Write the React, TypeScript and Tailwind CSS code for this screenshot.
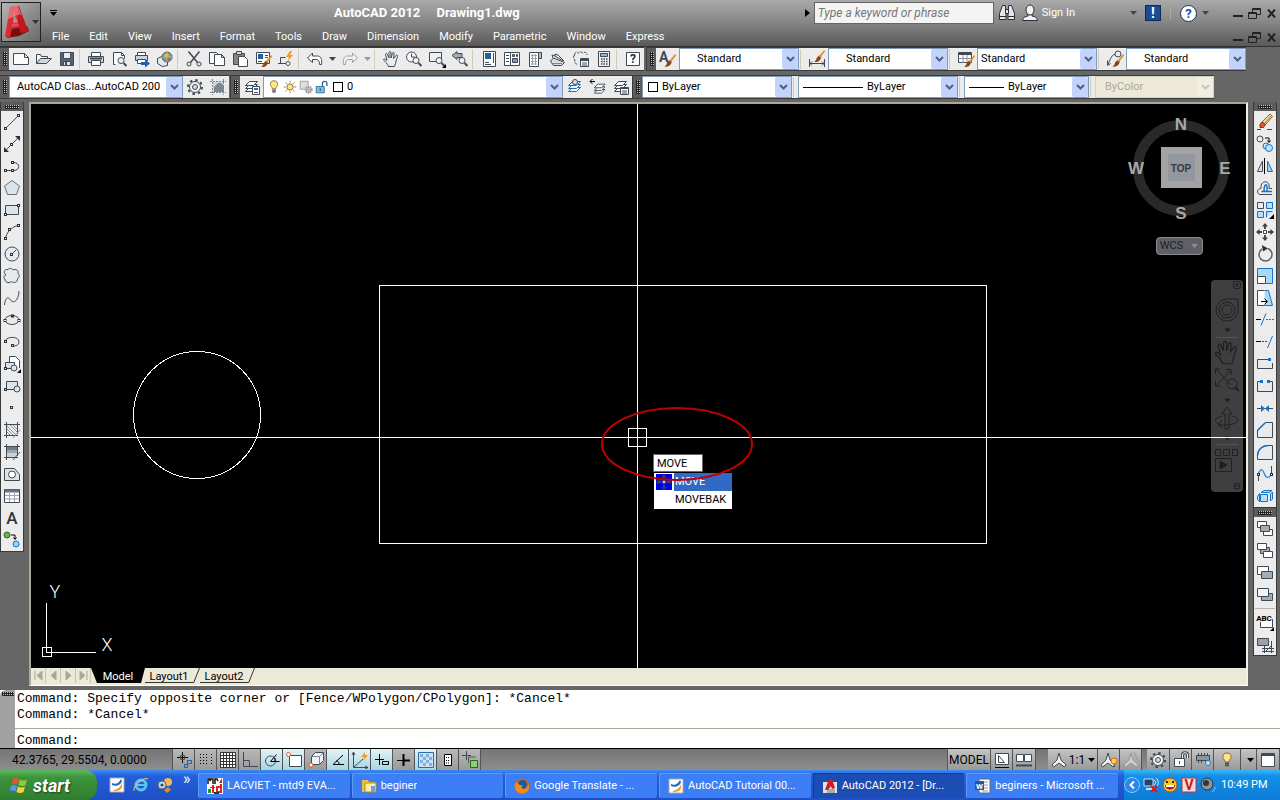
import React from 'react'
import clsx from 'clsx'

type IconMap = Record<string, React.ReactNode>

const Node = ({ x, y }: { x: number; y: number }) => (
    <rect x={x - 1} y={y - 1} width="2" height="2" fill="#ececec" stroke="#2b3138" />
)

const Brush = () => (
    <g stroke="none">
        <path d="M16.5 2.5l1.500 1-5 6.500-1.500-1.500z" fill="#e08a1e" />
        <path d="M11 8.500l2.500 2-1 2c-1 3-4 4-7.500 4 2-1.500 2.500-3 3-5z" fill="#8a4513" />
        <path d="M10.500 9l2.500 2" stroke="#f5c98a" />
    </g>
)

const Sheets = ({ color = '#3f4a54' }: { color?: string }) => (
    <g stroke={color} fill="#f8f8f8">
        <path d="M2.500 13.500h8l4-4h-8z" />
        <path d="M2.500 10.500h8l4-4h-8z" />
        <path d="M2.500 7.500h8l4-4h-8z" />
    </g>
)

const Lens = () => (
    <g>
        <circle cx="11" cy="10.500" r="3" fill="#eef4fa" />
        <path d="M13.500 13l3 3" strokeWidth="2" />
    </g>
)

const Hand = () => (
    <path d="M6.500 16.500c-1-3-3-4.500-5-6.500 0-1.500 1.500-1.500 3.500 0.500L3.500 4.500c0.300-1.500 1.500-1.500 2 0L7 8V2.500c0.300-1.300 1.700-1.300 2 0V8l1.500-5c0.500-1 1.700-0.800 1.700 0.500L11.500 8.500l2.500-3c1-0.800 2 0 1.500 1-1 2.500-1.500 6-3 10z" />
)

const icons: IconMap = {
    new: <path d="M1.500 3.500h11l4 4v7h-15zM12.500 3.500v4h4" fill="#fafafa" />,
    open: <><path d="M1.500 13.500v-9h4l1 2h6v2" fill="#f4f4f4" /><path d="M1.500 13.500l4-5h11l-5 5z" fill="#d2d6da" /></>,
    save: <><path d="M2.500 2.500h13v13h-13z" fill="#5a6470" /><path d="M5.500 2.500h7v6h-7z" fill="#e8ecf0" /><path d="M5.500 11.500h7v4h-7z" fill="#dfe3e8" /><path d="M7 12h2v3H7z" fill="#3f4a54" stroke="none" /></>,
    print: <><path d="M4.500 6.500v-4h9v4" fill="#fff" /><path d="M1.500 6.500h15v6h-15z" fill="#cfd3d7" /><path d="M4.500 10.500h9v5h-9z" fill="#fff" /><path d="M3 8.500h12" strokeWidth="2" /></>,
    preview: <><path d="M5.500 14.500h-2v-12h8l3 3v3M11.500 2.500v3h3" fill="#fafafa" /><Lens /></>,
    publish: <><path d="M4.500 5.500v-3h8v3" fill="#fff" /><path d="M2.500 5.500h12v5h-12z" fill="#cfd3d7" /><path d="M4.500 9.500h8v4h-8z" fill="#fff" /><path d="M8 12h4V9.500l5 4-5 4V15H8z" fill="#1564b8" stroke="none" /></>,
    globe: <><path d="M1.500 8.500l4-2 6 2v7l-5 1-5-3z" fill="#e6e9ec" /><circle cx="11" cy="7" r="5" fill="#4ba3dc" stroke="#59636e" /><path d="M8 4.500l4-1 1 3-3 2z" fill="#f0c430" stroke="none" /><path d="M11 8l3-1-1 3.500-2 0.500z" fill="#e04b2b" stroke="none" /><path d="M11 2v10M6 7h10" stroke="#e8b020" /></>,
    cut: <><path d="M3.500 1.500l9 11M14.500 1.500l-9 11" strokeWidth="1.500" /><circle cx="4" cy="14" r="2" /><circle cx="14" cy="14" r="2" /></>,
    copy: <><path d="M1.500 2.500h7l2 2v9h-9z" fill="#f8f8f8" /><path d="M6.500 4.500h7l3 3v8h-10zM13.500 4.500v3h3" fill="#fff" /></>,
    paste: <><path d="M2.500 3.500h11v11h-11z" fill="#8a8378" /><path d="M5.500 1.500h5v3h-5z" fill="#d9d9d9" /><path d="M7.500 6.500h6l3 3v7h-9z" fill="#fff" /></>,
    match: <><path d="M2.500 2.500h13v11h-13z" fill="#fff" /><path d="M4 4h5v5H4z" fill="#245f9f" stroke="none" /><path d="M11 5.500h3M11 7.500h3M4 11.500h4" /><g transform="translate(3 3) scale(.85)"><Brush /></g></>,
    block: <><path d="M8.500 7.500h-5v6h6M1 13.500h3" /><circle cx="11" cy="13.500" r="2" fill="#fff" /><path d="M13 1l-4 6h3l-1 4 5-6h-3l2-4z" fill="#f39b1d" stroke="none" /></>,
    undo: <path d="M1.500 8l5-5v3h5c3 0 5 3 4 8.500h-2c0-3.500-1-5-3-5h-4v3z" fill="#fcfcfc" />,
    redo: <path d="M16.500 8l-5-5v3h-5c-3 0-5 3-4 8.500h2c0-3.500 1-5 3-5h4v3z" fill="#f0f0f0" stroke="#a0a0a0" />,
    pan: <Hand />,
    zoomrt: <><circle cx="6.500" cy="7" r="5" fill="#f7f7f7" /><path d="M6.500 3.500v3.500h3.500" /><Lens /></>,
    zoomwin: <><path d="M1.500 2.500h12v9h-12z" fill="#eef0f2" /><Lens /><path d="M18 14v4h-4z" fill="#000" stroke="none" /></>,
    zoomprev: <><path d="M1 5.500l5-4v2h5v4H6v2z" fill="#a3abb3" /><Lens /></>,
    props: <><path d="M3.500 1.500h12v15h-12z" fill="#fff" /><path d="M5 3h6v6H5z" fill="#245f9f" stroke="none" /><path d="M13.500 3v10M5 12.500h4M5 14.500h6" /></>,
    dc: <><path d="M1.500 2.500h15v13h-15zM7.500 2.500v13" fill="#fff" /><path d="M9.500 4.500h2v2h-2zM13.500 4.500h1v2h-1zM9.500 8.500h5v4h-5z" fill="#7d97b4" /><path d="M3 5.500h3M3 8.500h3M3 11.500h3" /></>,
    palettes: <><path d="M3.500 2.500h9v14h-9z" fill="#fff" /><path d="M12.500 2.500h3v6h-3z" fill="#b9c0c7" /><path d="M5 5.500h6M5 8.500h6M5 11.500h6M5 14h6M6.500 4v11M9.500 4v11" stroke="#9aa3ac" /></>,
    sheetset: <><path d="M1.500 11l3-3 11 4.500-3 3h-8z" fill="#dadfe4" /><path d="M4 8l-1-3 3 1 8 5M6 6l0-2 3 1 6 6" /><path d="M4 13.500h9" stroke="#7b858f" /></>,
    markup: <><path d="M2.500 5c0-3 3-3.500 4-2 1-1.500 3-1.500 4 0 2-1.500 5-0.500 4.500 2M2.500 5c-1.500 2-1 4 .5 5-1 3 1 4.500 3 4" strokeDasharray="3 1" /><path d="M8.500 8.500h8v8h-8z" fill="#fff" /><path d="M9 10h7" strokeWidth="2" /><path d="M10 13h5M10 15h5" /></>,
    calc: <><path d="M3.500 1.500h11v15h-11z" fill="#eef0f2" /><path d="M5.500 3.500h7v3h-7z" fill="#9fb3c8" /><path d="M6 9h7M6 11.500h7M6 14h7" strokeWidth="1.500" strokeDasharray="1.500 1" /></>,
    help: <><path d="M2.500 2.500h13v13h-13z" fill="#fff" /><text x="9" y="13" fontSize="12" fontWeight="700" textAnchor="middle" fill="#1d2a38" stroke="none">?</text></>,
    textstyle: <><text x="0" y="12" fontSize="14" fontWeight="700" fill="#3f4a54" stroke="none">A</text><g transform="translate(1 2) scale(.9)"><Brush /></g></>,
    dimstyle: <><path d="M1.500 9v8M16.500 9v8M2 13.500h14M4 11.500l-2 2 2 2M14 11.500l2 2-2 2" /><g transform="translate(2 -2) scale(.85)"><Brush /></g></>,
    tablestyle: <><path d="M1.500 2.500h13v10h-13z" fill="#fff" /><path d="M2 4h12" strokeWidth="2" /><path d="M1.500 8.500h13M6 5v8M10 5v8" stroke="#8a939b" /><g transform="translate(3 3) scale(.85)"><Brush /></g></>,
    leader: <><circle cx="12" cy="4" r="3" /><path d="M9 4.500c-3 0-4 3-7 10M1.500 10.500v5l3-2" /><g transform="translate(2 2) scale(.9)"><Brush /></g></>,
    gear: <><circle cx="9" cy="9" r="5.500" fill="#f4f4f4" /><circle cx="9" cy="9" r="2.500" fill="#d5d8db" /><circle cx="9" cy="9" r="7" strokeWidth="2" strokeDasharray="2.500 3" /></>,
    workspace: <><path d="M4 4h10v10H4z" fill="#d0d4d8" stroke="none" /><path d="M1 3.500h16M1 14.500h16M3.500 1v16M14.500 1v16" strokeDasharray="2 1" stroke="#7d8790" /><path d="M5 14V9l4-4h3l3 3v6z" fill="#7d8790" stroke="none" /></>,
    layers: <><Sheets /><path d="M9.500 8.500h7v8h-7z" fill="#fff" /><path d="M11 10h4v2h-4z" fill="#1673c7" stroke="none" /><path d="M11 14.500h4" /></>,
    bulb: <><path d="M9 2c-3 0-4.500 2-4 4.500.3 1.500 2 2.500 2 4.500h4c0-2 1.700-3 2-4.500C13.500 4 12 2 9 2z" fill="#ffe58a" stroke="#8a6a2a" /><path d="M7 12.500h4M7 14.500h4" strokeWidth="1.500" /></>,
    sun: <><circle cx="9" cy="9" r="3.500" fill="#ffe58a" stroke="#80672c" /><path d="M9 2v2M9 14v2M2 9h2M14 9h2M4 4l1.500 1.500M12.500 12.500L14 14M4 14l1.500-1.500M12.500 5.500L14 4" stroke="#80672c" /></>,
    vpfreeze: <g stroke="#9b9b9b"><path d="M2.500 2.500h9v9h-9z" fill="#ddd" /><circle cx="12" cy="12" r="3.500" fill="#bbb" strokeWidth="2" strokeDasharray="1.500 1" /></g>,
    lock: <><path d="M9.500 8V5c0-3 5-3 5 0v3" strokeWidth="1.500" stroke="#286a94" /><path d="M2.500 8.500h9v7h-9z" fill="#75c3ef" stroke="#286a94" /><path d="M7 10.500v3" stroke="#103a58" /></>,
    layercur: <><Sheets color="#1673c7" /><circle cx="9" cy="4" r="2.500" fill="#dde3e8" /></>,
    layerprev: <><g transform="translate(3 3) scale(.9)"><Sheets /></g><path d="M1 3.500h5M3.500 1L1 3.500 3.500 6" stroke="#000" /></>,
    layerstate: <><Sheets /><path d="M8.500 9.500h8v7h-8z" fill="#fff" /><path d="M8.500 10.500h8" /><path d="M10 13h5M10 15h5" /></>,

    line: <><path d="M3 15L15 3" /><Node x={2.500} y={15.500} /><Node x={15.500} y={2.500} /></>,
    xline: <><path d="M2 16L16 2" /><path d="M1 12v5h5zM17 6V1h-5z" fill="#2b3138" stroke="none" /><Node x={8.500} y={9.500} /></>,
    pline: <><path d="M2.500 13.500h8c7 0 7-8 0-8" /><Node x={2.500} y={13.500} /><Node x={9.500} y={13.500} /><Node x={9.500} y={5.500} /></>,
    polygon: <path d="M9 1.500l7.500 5.500-3 8.500h-9L1.500 7z" fill="#dde4e9" stroke="#68727b" />,
    rect: <><path d="M2.500 4.500h13v9h-13z" fill="#dde4e9" /><Node x={2.500} y={13.500} /><Node x={15.500} y={4.500} /></>,
    arc: <><path d="M2.500 15.500c1-6 6-12 13-13" /><Node x={2.500} y={15.500} /><Node x={6.500} y={6.500} /><Node x={15.500} y={2.500} /></>,
    circle: <><circle cx="9" cy="9" r="7" fill="#e5eaee" /><path d="M9 9l4-4" /><Node x={8.500} y={9.500} /></>,
    revcloud: <path d="M3 8C0 6 1 2 5 2.500c2-2 4-1 5 .5 3-1.500 6 .5 5 3.500 2 2 1.500 4-.5 5 .5 4-4 5-6 3-3 2.500-7 .5-6.500-2.500-2-1-1.500-3 1-4z" fill="#e5eaee" />,
    spline: <path d="M1.500 16c1-9 4-8 6-5 3 4 8 1 8.500-9" />,
    ellipse: <><ellipse cx="9" cy="9" rx="7" ry="4.500" fill="#e5eaee" /><Node x={2} y={9.500} /><Node x={9.500} y={5} /><Node x={16} y={9.500} /></>,
    ellipsearc: <><path d="M2 8c2-5 14-5 14 1 0 3-3 4-6 4" /><Node x={2.500} y={8.500} /><Node x={9.500} y={12.500} /></>,
    insert: <><path d="M6.500 7V1.500h6l4 4V13" fill="#fff" /><path d="M2.500 7.500h9v6h-9z" fill="#dde4e9" /><circle cx="11" cy="13" r="3" fill="#dde4e9" /><path d="M18 14v4h-4z" fill="#000" stroke="none" /><Node x={2.500} y={13.500} /></>,
    makeblock: <><path d="M3.500 4.500h11v8h-11z" fill="#dde4e9" /><circle cx="14" cy="12" r="3" fill="#dde4e9" /><Node x={2.500} y={12.500} /></>,
    point: <Node x={8.500} y={8.500} />,
    hatch: <><path d="M1 3.500h16M1 14.500h14M3.500 1v16M14.500 1v12" /><path d="M4 5l9 9M4 8l6 6M4 11l3 3M7 4l7 7M10 4l4 4M17 9l-7 8" stroke="#8a939b" /></>,
    gradient: <><path d="M4 4h10v3H4z" fill="#727c85" stroke="none" /><path d="M4 7h10v3H4z" fill="#9fa7ad" stroke="none" /><path d="M4 10h10v4H4z" fill="#ccd1d5" stroke="none" /><path d="M1 3.500h16M1 14.500h14M3.500 1v16M14.500 1v12M17 9l-7 8" /></>,
    region: <><path d="M1.500 3.500h10l5 6v6h-15z" fill="#dde4e9" /><circle cx="9" cy="9.500" r="3.500" fill="#fff" /></>,
    table: <><path d="M1.500 2.500h15v13h-15z" fill="#fff" /><path d="M2 4h14" strokeWidth="3" stroke="#67738a" /><path d="M2 8.500h14M2 12h14M6.500 6v9M11.500 6v9" stroke="#9ba4ac" /></>,
    mtext: <text x="9" y="15" fontSize="17" fontWeight="500" textAnchor="middle" fill="#2f363d" stroke="none">A</text>,
    addsel: <><circle cx="4" cy="4" r="3" fill="#6fb24c" stroke="#2c6a1a" /><circle cx="13" cy="13" r="3" fill="#9ad3fa" stroke="#1673c7" /><path d="M8 4h4v4M10.500 6.500l1.500 2 1.500-2" stroke="#000" /></>,

    erase: <><path d="M1 16.500h4M11 16.500h5" /><path d="M6 9l8-8 2.500 2.500-7 8z" fill="#edd9a8" stroke="#8a6a2a" /><path d="M9 10l6-7" stroke="#c27a18" /><path d="M6 9l3.500 2.500-2 3-3.500 0v-3z" fill="#e0552a" stroke="#8d2c10" /></>,
    copyobj: <><circle cx="4" cy="4" r="3" /><circle cx="10" cy="11" r="3" stroke="#1673c7" fill="#c5e3f8" /><circle cx="13" cy="13" r="3.500" stroke="#1673c7" fill="#c5e3f8" /><path d="M9 3h4v4M11.500 5.500l1.500 2 1.500-2" stroke="#000" /></>,
    mirror: <><path d="M6.500 4v10.500h-5z" fill="#e1e5e8" /><path d="M8.500 1v16" stroke="#000" /><path d="M11.500 4v10.500h5z" fill="#9fd1f2" stroke="#1673c7" /></>,
    offset: <><path d="M16 15.500H4c-4-1-3-6 1-6-1-9 10-9 8 0h3" /><path d="M16 12.500H5.500h2.500c0-9 4-9 3 0" stroke="#1673c7" strokeWidth="1.500" /></>,
    array: <><path d="M1.500 1.500h6v6h-6z" /><path d="M10.500 1.500h6v6h-6zM1.500 10.500h6v6h-6zM10.500 16.500v-6h6" stroke="#1673c7" fill="#b9def6" /><path d="M18 13v5h-5z" fill="#000" stroke="none" /></>,
    move: <><path d="M9 3v3M9 12v3M3 9h3M12 9h3" strokeWidth="2" /><path d="M9 0l3 3.500H6zM9 18l3-3.500H6zM0 9l3.500-3v6zM18 9l-3.500-3v6z" fill="#3d3d3d" stroke="none" /><path d="M7.500 7.500h3v3h-3z" fill="#fff" /></>,
    rotate: <><path d="M6 4a6.500 6.500 0 1 0 6-.5" strokeWidth="1.500" stroke="#59636d" /><path d="M6 0l6 3.500-5 3z" fill="#2b3138" stroke="none" /></>,
    scale: <><path d="M1.500 1.500h15v15h-15z" fill="#a8d8f4" stroke="#1673c7" /><path d="M1.500 9.500h8v7h-8z" fill="#fff" /></>,
    stretch: <><path d="M8.500 1.500h4l4 15h-8" fill="#a8d8f4" stroke="#1673c7" /><path d="M8.500 1.500h-7v15h7" fill="#fff" /><path d="M5 12.500h6M8.500 9.500l3 3-3 3" stroke="#000" /></>,
    trim: <><path d="M0 8.500h5" stroke="#000" /><path d="M10 2.500l-5 12" stroke="#1673c7" /><path d="M10 8.500h8" stroke="#1673c7" strokeDasharray="2 1" /></>,
    extend: <><path d="M0 8.500h5" stroke="#000" /><path d="M6 8.500h6" strokeDasharray="2 1" /><path d="M16.500 3l-5 12" stroke="#1673c7" /></>,
    breakpt: <><path d="M16.500 8v5.500h-15v-9h12" fill="#e7ebee" /><path d="M12 3h3v3h-3z" fill="#1673c7" stroke="none" /></>,
    brk: <><path d="M4.500 4.500h-3v10h15v-10h-3" fill="#e7ebee" /><path d="M4 3h3v3H4zM11 3h3v3h-3z" fill="#1673c7" stroke="none" /></>,
    join: <><path d="M1 9.500h16" /><path d="M5 6l4 3.500L5 13zM13 6L9 9.500l4 3.500z" fill="#1673c7" stroke="none" /></>,
    chamfer: <><path d="M10 1.500h6.500v15h-15V9l8-7.500" fill="#e7ebee" /><path d="M1.500 9.500l8-8" stroke="#1673c7" strokeWidth="1.500" /></>,
    fillet: <><path d="M13 2.500h3.500v14h-15v-3C1.500 7 6 2.500 13 2.500" fill="#e7ebee" /><path d="M1.500 12.500c0-6 5-10 10-10" stroke="#1673c7" strokeWidth="1.500" /></>,
    blend: <><path d="M2.500 16V9M15.500 9V1" /><path d="M2.500 9c2-6 4-5 6 0s5 4 7 0" stroke="#3a93de" strokeWidth="1.500" /><Node x={2.500} y={9.500} /><Node x={15.500} y={9.500} /></>,
    explode: <g stroke="#1673c7" fill="#b9def6"><path d="M4.500 7.500h7v7h-7z" /><path d="M5 5.500l3-2h8l-3 2zM14.500 7l2-2v7l-2 2zM1.500 9.500l2-3v8l-2-2z" /></g>,

    front: <><path d="M1.500 2.500h9v6h-9z" fill="#fff" /><path d="M7.500 10.500h9v6h-9z" fill="#fff" /><path d="M4.500 6.500h9v6h-9z" fill="#a3abb3" /></>,
    back: <><path d="M4.500 6.500h9v6h-9z" fill="#a3abb3" /><path d="M1.500 2.500h9v6h-9z" fill="#fff" /><path d="M7.500 10.500h9v6h-9z" fill="#fff" /></>,
    above: <><path d="M1.500 3.500h11v8h-11z" fill="#fff" /><path d="M5.500 8.500h11v7h-11z" fill="#a3abb3" /></>,
    under: <><path d="M5.500 8.500h11v7h-11z" fill="#a3abb3" /><path d="M1.500 3.500h11v8h-11z" fill="#eef4fa" /></>,
    abc: <><path d="M4.500 9v5.500h12V6" fill="#fff" /><text x="8" y="8" fontSize="8" fontWeight="700" textAnchor="middle" fill="#000" stroke="none">ABC</text><path d="M18 14v4h-4z" fill="#000" stroke="none" /></>,
    hatchback: <><path d="M6 13.500h12M6 16.500h12M8.500 8v10M15.500 6v12M9 17l6-6" /><path d="M1.500 3.500h11v7h-11z" fill="#9aa3ac" /></>,

    infer: <><path d="M7.500 1v11M2 6.500h11" stroke="#000" /><path d="M5.500 4.500h4v4h-4z" /><path d="M12.500 9v7M12.500 9.500h4v3h-3M9.500 13.500h3v3h-3z" stroke="#1564b8" /></>,
    snap: <path d="M3 3.500h9M3 6.500h9M3 9.500h9M3 12.500h9M14.500 3v11" strokeDasharray="1 2" stroke="#000" />,
    grid: <path d="M1.500 1.500h15v15h-15zM1.500 4.500h15M1.500 7.500h15M1.500 10.500h15M1.500 13.500h15M4.500 1.500v15M7.500 1.500v15M10.500 1.500v15M13.500 1.500v15" fill="#fff" stroke="#333" />,
    ortho: <path d="M2.500 1v14.500H17M2.500 9.500h6v6" />,
    polar: <><circle cx="7.500" cy="10" r="5" /><path d="M7.500 10.500h9M7.500 10.500l6-7M12 7v4" stroke="#000" /></>,
    osnap: <><path d="M4.500 4.500h12v11h-12z" fill="#fff" /><circle cx="3.500" cy="3.500" r="2" stroke="#e0601c" fill="#fff" /></>,
    osnap3d: <><path d="M4.500 5.500l4-4h8v8l-4 4h-8z" fill="#eef4fa" /><path d="M4.500 5.500h8v8M12.500 5.500l4-4" stroke="#7b858f" /><circle cx="4" cy="14" r="2" stroke="#e0601c" fill="#fff" /></>,
    otrack: <path d="M14 4L4 13.500h11M7 10c2 0 3 1 3 3" stroke="#000" />,
    ducs: <><path d="M2.500 1v15.500H17M1 4l1.500-3L4 4M14 15l3 1.500-3 1.500M3 16L12 8" /><path d="M14 1l-4 5h3l-1 4 5-6h-3z" fill="#f39b1d" stroke="none" /></>,
    dyn: <><path d="M6.500 3v11M2 8.500h9M9.500 10.500h6v3h-6z" stroke="#000" /></>,
    lwt: <><path d="M2 9.500h7" stroke="#000" /><path d="M9 9.500h6M8.500 3v12" stroke="#000" strokeWidth="2" /></>,
    tpy: <><path d="M1.500 1.500h15v15h-15z" fill="#cfe2f6" stroke="#2a6aad" /><path d="M3 4.500h12M3 10.500h12" stroke="#86b0dc" strokeWidth="3" strokeDasharray="3 3" /><path d="M6 7.500h9M6 13.500h9" stroke="#86b0dc" strokeWidth="3" strokeDasharray="3 3" /></>,
    qp: <><path d="M5.500 3.500h7v11h-7z" fill="#fff" stroke="#000" /><path d="M7 6.500h4M7 9.500h4M7 12h4" stroke="#000" strokeDasharray="1 1" /></>,
    sc: <><path d="M5.500 0v9M1 4.500h9" /><path d="M7.500 12v-6h7" stroke="#555" /><path d="M9.500 9.500h7v7h-7z" fill="#8ccf7a" stroke="#27691a" /></>,
    layout: <><path d="M2.500 2.500h13v11h-13z" fill="#fff" /><path d="M5.500 4.500v7h6z" fill="none" /><path d="M2 16.500h14" stroke="#000" /></>,
    quickview: <><path d="M1.500 3.500h7v7h-7zM9.500 3.500h7v7h-7z" fill="#fff" /><path d="M1 14.500h16" strokeWidth="2" /></>,
    anno: <path d="M9 2l2 7 5 5-1.500 2L9 12l-5.500 4L2 14l5-5z" fill="#f2f2f2" />,
    annovis: <><path d="M8 2l2 7 5 5-1.500 2L8 12l-5.500 4L1 14l5-5z" fill="#f2f2f2" /><circle cx="14" cy="10" r="3" fill="#ffd24a" stroke="#e0601c" /><path d="M13 15h2" /></>,
    annoauto: <path d="M9 2l2 7 5 5-1.500 2L9 12l-5.500 4L2 14l5-5zM12 1l4 9" fill="#cfcfcf" stroke="#969696" />,
    unlock: <><path d="M10.500 8V4c0-3 5-3 5 0v3" strokeWidth="3" stroke="#3f4a54" /><path d="M10.500 8V4c0-3 5-3 5 0v3" stroke="#fff" /><path d="M2.500 7.500h10v8h-10z" fill="#fff" /><path d="M7.500 10v3" /></>,
    hardware: <><path d="M2.500 4.500h13v5h-13z" fill="#8b949c" /><path d="M4.500 2v2M7.500 2v2M10.500 2v2M13.500 2v2M4.500 10v2M7.500 10v2" /><circle cx="14" cy="12" r="2.500" fill="#bfe3ff" stroke="#2a7ec4" /></>,
    clean: <><path d="M2.500 2.500h13v13h-13z" fill="#fff" /><path d="M3 4h12" strokeWidth="2" /></>,
}

const Icon = ({ name, size = 18 }: { name: string; size?: number }) => (
    <svg width={size} height={size} viewBox="0 0 18 18" fill="none" stroke="#3f4a54" strokeWidth="1" className="shrink-0" aria-hidden="true">
        {icons[name]}
    </svg>
)

const IconButton = ({ name, className }: { name: string; className?: string }) => (
    <button type="button" aria-label={name} className={clsx('flex items-center justify-center shrink-0', className)}>
        <Icon name={name} />
    </button>
)

const Caret = ({ className }: { className?: string }) => (
    <svg width="7" height="4" viewBox="0 0 7 4" className={clsx('shrink-0', className)} fill="currentColor" aria-hidden="true"><path d="M0 0h7L3.500 4z" /></svg>
)

const Sep = () => <span className="w-px h-5 mr-1 ml-px shrink-0 bg-[#cfcdb8]" />

const dots = 'bg-[conic-gradient(#c4c4c4_25%,#222_0)] bg-[length:2px_2px]'

const Grip = ({ vertical = false }: { vertical?: boolean }) => (
    <span className={clsx('shrink-0 flex items-center justify-center bg-[#5c5c5c]', vertical ? 'h-[9px] w-full' : 'w-[9px] self-stretch')}>
        <span className={clsx(dots, vertical ? 'w-[14px] h-1' : 'w-1 h-[14px]')} />
    </span>
)

interface ComboProps {
    label: string
    value: string
    className?: string
    textClass?: string
    disabled?: boolean
    children?: React.ReactNode
}

const Combo = ({ label, value, className, textClass, disabled, children }: ComboProps) => (
    <div className={clsx('flex items-center h-[22px] border shrink-0', disabled ? 'bg-[#ece9d8] border-[#d6d2c0]' : 'bg-white border-[#7f9db9]', className)}>
        {children}
        <select aria-label={label} disabled={disabled} className={clsx('flex-1 min-w-0 appearance-none bg-transparent outline-none opacity-100', textClass, disabled ? 'text-[#aca899]' : 'text-black')}>
            <option>{value}</option>
        </select>
        <span className={clsx('w-4 h-[20px] shrink-0 flex items-center justify-center rounded-xs', disabled ? 'bg-[#f2efe2] text-[#c9c6b8]' : 'bg-[#c3d3fb] text-[#4d6185]')}>
            <svg width="9" height="7" viewBox="0 0 9 7" fill="none" stroke="currentColor" strokeWidth="2"><path d="M1 1l3.500 3.500L8 1" /></svg>
        </span>
    </div>
)

const WindowControls = () => (
    <div className="flex items-center">
        <button type="button" aria-label="Minimize" className="w-[17px] h-4 flex justify-center items-end pb-1"><span className="w-[10px] h-[2px] bg-[#222]" /></button>
        <button type="button" aria-label="Restore" className="w-[17px] h-4 flex justify-center items-center">
            <svg width="13" height="11" viewBox="0 0 13 11" fill="none" stroke="#222"><path d="M4.500 4V.5h8v6h-4M.5 4.500h8v6h-8zM1 5.500h7M5 1.500h7" /></svg>
        </button>
        <button type="button" aria-label="Close" className="w-[17px] h-4 flex justify-center items-center">
            <svg width="9" height="9" viewBox="0 0 9 9" stroke="#222" strokeWidth="2"><path d="M1 0.500l7 8M8 .5l-7 8" /></svg>
        </button>
    </div>
)

const menus = ['File', 'Edit', 'View', 'Insert', 'Format', 'Tools', 'Draw', 'Dimension', 'Modify', 'Parametric', 'Window', 'Express']

const Header = () => (
    <header className="flex bg-linear-to-b from-[#a9a9a9] via-[#858585] to-[#595959] border-b border-[#333] h-[47px] text-white">
        <button type="button" aria-label="Application menu" className="w-10 h-10 mt-[2px] ml-px shrink-0 flex items-center border border-[#222] bg-linear-to-br from-[#b5b5b5] to-[#6b6b6b] text-[#333]">
            <svg width="30" height="38" viewBox="0 0 30 38" className="shrink-0">
                <path d="M5 35l3-9 17-3 2 5-10 5z" fill="#7a0c0c" />
                <path d="M8 4l8-1 10 25-7 2-2-6-7 1-2 9-5 0z" fill="#de2930" />
                <path d="M16 3l1 0 9 25-7 2-2-6-7 1 1-4 5-1z" fill="#c3151c" />
                <path d="M12 11l4 8-5 1z" fill="#9a9a9a" />
                <path d="M8 4l8-1 4 9c-6-1-9 3-14 4z" fill="#fff" opacity=".3" />
                <path d="M10 21l6-1 1 3-7 1z" fill="#f04a50" />
            </svg>
            <Caret className="text-[#333]" />
        </button>
        <div className="flex-1 min-w-0 flex flex-col">
            <div className="flex items-center h-[26px]">
                <button type="button" aria-label="Quick access" className="w-6 pl-[9px] flex flex-col gap-px text-black"><span className="w-[7px] h-px bg-black" /><Caret /></button>
                <h1 className="flex-1 text-center text-[13px] font-bold whitespace-pre pr-4">{'AutoCAD 2012     Drawing1.dwg'}</h1>
                <svg width="5" height="8" viewBox="0 0 5 8" className="mr-1"><path d="M0 0l5 4-5 4z" fill="#000" /></svg>
                <input aria-label="Search" placeholder="Type a keyword or phrase" className="w-[180px] h-[22px] px-[3px] border border-[#666] bg-[#f4f4f4] text-[12px] italic text-black placeholder:text-[#777] outline-none" />
                <button type="button" aria-label="Find" className="ml-1">
                    <svg width="18" height="18" viewBox="0 0 18 18" fill="#e4e8ea" stroke="#27303a"><path d="M4.500 1.500h3v4l.5 3v7h-6.500v-6zM10.500 1.500h3l3 8v6H10v-7l.5-3z" /><path d="M7.500 5.500h3v4h-3z" /><path d="M2 12.500h6M10 12.500h6" /></svg>
                </button>
                <button type="button" className="flex items-center gap-1 ml-[6px] text-[11px]">
                    <svg width="16" height="18" viewBox="0 0 16 18" fill="#f1f1f1" stroke="#27303a"><path d="M.5 16.500c0-3 3-4 5.500-4.500v-2h4v2c2.500.5 5.500 1.500 5.500 4.500z" /><ellipse cx="8" cy="6" rx="4" ry="5" /></svg>
                    Sign In
                </button>
                <Caret className="ml-[55px] text-[#444]" />
                <button type="button" aria-label="Exchange" className="w-4 h-4 ml-2 bg-[#1d4a96] border border-[#12284e] text-[14px] leading-[14px] font-bold">!</button>
                <span className="w-px h-3 ml-[9px] bg-[#aaa]" />
                <button type="button" aria-label="Help" className="w-[17px] h-[17px] ml-[9px] rounded-full bg-white border border-[#1c2f50] text-[#1b50b0] text-[13px] leading-[15px] font-bold">?</button>
                <Caret className="ml-[5px] mr-5 text-[#444]" />
                <WindowControls />
            </div>
            <nav className="flex items-center h-5 pt-[2px] pl-[11px] text-[11px]">
                <ul className="flex flex-1 gap-5">
                    {menus.map((menu) => <li key={menu}><a href="#">{menu}</a></li>)}
                </ul>
                <WindowControls />
            </nav>
        </div>
    </header>
)

const standardGroups = [
    ['new', 'open', 'save'],
    ['print', 'preview', 'publish', 'globe'],
    ['cut', 'copy', 'paste', 'match', 'block'],
]

const styleCombos = [
    { icon: 'textstyle', text: 'pl-[17px]' },
    { icon: 'dimstyle', text: 'pl-[17px]' },
    { icon: 'tablestyle', text: 'pl-[3px]' },
    { icon: 'leader', text: 'pl-[17px]' },
]

const bar = 'flex items-center shrink-0 h-6 bg-[#ececec] border-y border-[#3a3a3a]'
const btn = 'w-[23px] h-[22px]'

const Toolbars = () => (
    <div className="flex flex-col gap-1 pb-[3px] text-[11px] overflow-hidden">
        <div className="flex">
            <div className={bar}>
                <Grip />
                {standardGroups.map((group, index) => (
                    <React.Fragment key={index}>
                        {group.map((name) => <IconButton key={name} name={name} className={btn} />)}
                        <Sep />
                    </React.Fragment>
                ))}
                <IconButton name="undo" className={btn} />
                <span className="w-3 flex justify-center"><Caret className="text-[#444]" /></span>
                <IconButton name="redo" className={btn} />
                <span className="w-3 flex justify-center"><Caret className="text-[#999]" /></span>
                <Sep />
                {['pan', 'zoomrt', 'zoomwin', 'zoomprev'].map((name) => <IconButton key={name} name={name} className={btn} />)}
                <Sep />
                {['props', 'dc', 'palettes', 'sheetset', 'markup', 'calc'].map((name) => <IconButton key={name} name={name} className={btn} />)}
                <Sep />
                <IconButton name="help" className={btn} />
            </div>
            <div className={clsx(bar, 'ml-[2px] border-l')}>
                <Grip />
                {styleCombos.map(({ icon, text }, index) => (
                    <React.Fragment key={icon}>
                        {index > 0 && <Sep />}
                        <IconButton name={icon} className={btn} />
                        <Combo label={icon} value="Standard" className="w-[120px]" textClass={text} />
                    </React.Fragment>
                ))}
            </div>
        </div>
        <div className="flex">
            <div className={bar}>
                <Grip />
                <Combo label="Workspace" value="AutoCAD Clas...AutoCAD 200" className="w-[174px]" textClass="pl-[7px]" />
                <IconButton name="gear" className={btn} />
                <IconButton name="workspace" className={btn} />
            </div>
            <div className={clsx(bar, 'ml-px border-l')}>
                <Grip />
                <IconButton name="layers" className={btn} />
                <Combo label="Layer" value="0" className="w-[300px]" textClass="pl-1">
                    <span className="flex pl-[2px]">
                        <Icon name="bulb" size={16} /><Icon name="sun" size={16} /><Icon name="vpfreeze" size={16} /><Icon name="lock" size={16} />
                    </span>
                    <span className="w-[10px] h-[10px] ml-[3px] border border-black" />
                </Combo>
                <IconButton name="layercur" className={btn} />
                <IconButton name="layerprev" className={btn} />
                <IconButton name="layerstate" className={btn} />
            </div>
            <div className={clsx(bar, 'border-l')}>
                <Grip />
                <Combo label="Color" value="ByLayer" className="w-[150px]" textClass="pl-1">
                    <span className="w-[10px] h-[10px] ml-[5px] border border-black" />
                </Combo>
                <Sep />
                <Combo label="Linetype" value="ByLayer" className="w-[160px]" textClass="pl-1">
                    <span className="w-[60px] h-px ml-1 bg-black" />
                </Combo>
                <Sep />
                <Combo label="Lineweight" value="ByLayer" className="w-[125px]" textClass="pl-1">
                    <span className="w-[35px] h-px ml-1 bg-black" />
                </Combo>
                <Sep />
                <Combo label="Plot style" value="ByColor" className="w-[119px]" textClass="pl-[9px]" disabled />
            </div>
        </div>
    </div>
)

const drawTools = ['line', 'xline', 'pline', 'polygon', 'rect', 'arc', 'circle', 'revcloud', 'spline', 'ellipse', 'ellipsearc', 'insert', 'makeblock', 'point', 'hatch', 'gradient', 'region', 'table', 'mtext', 'addsel']
const modifyTools = ['erase', 'copyobj', 'mirror', 'offset', 'array', 'move', 'rotate', 'scale', 'stretch', 'trim', 'extend', 'breakpt', 'brk', 'join', 'chamfer', 'fillet', 'blend', 'explode']

const VerticalBar = ({ tools, children }: { tools: string[]; children?: React.ReactNode }) => (
    <div className="w-6 flex flex-col bg-[#ececec] border-x border-b border-[#3a3a3a]">
        <Grip vertical />
        {tools.map((name) => <IconButton key={name} name={name} className="w-[22px] h-[22px]" />)}
        {children}
    </div>
)

const ViewCube = () => (
    <div className="absolute top-[10px] right-[14px] w-[106px] flex flex-col items-center">
        <svg width="106" height="108" viewBox="0 0 106 108" fontFamily="Liberation Sans, sans-serif" fontWeight="700" fontSize="17" fill="#a8a8a8" textAnchor="middle">
            <circle cx="55" cy="54" r="43" fill="none" stroke="#292929" strokeWidth="10" />
            <text x="55" y="16">N</text>
            <text x="55" y="105">S</text>
            <text x="10" y="60">W</text>
            <text x="99" y="60">E</text>
            <path d="M35 33h41v41H35z" fill="#a3a3a3" />
            <path d="M42 40h27v27H42z" fill="#92989e" />
            <text x="55" y="58" fontSize="10" fill="#3a3a3a">TOP</text>
        </svg>
        <button type="button" className="mt-[15px] w-[47px] h-[18px] rounded-sm border border-[#8b8b90] bg-[#5f5f66] text-[#1f1f22] text-[11px] flex items-center justify-center gap-2">WCS <Caret className="text-[#8b8b90]" /></button>
    </div>
)

const NavBar = () => (
    <div className="absolute top-[176px] right-[3px] w-8 h-[212px] rounded-sm bg-[#3f3f3f]">
        <svg width="32" height="212" viewBox="0 0 32 212" fill="none" stroke="#202020">
            <rect x="22.500" y="1.500" width="7" height="7" rx="2" /><path d="M24 3l4 4M28 3l-4 4" />
            <path d="M27 19v12a11 11 0 1 1-11-12z" /><circle cx="16" cy="30" r="8" /><circle cx="16" cy="30" r="5" />
            <path d="M14 49h5l-2.500 3z" fill="#202020" /><path d="M5 57.500h22" stroke="#555" />
            <g transform="translate(2 59) scale(1.500)" strokeWidth=".8"><Hand /></g>
            <path d="M4.500 94v-5h5M15 89.500h5v5M4.500 101v5h5M5 89l15 16M20 90L5 106" /><circle cx="21" cy="104" r="5" /><path d="M24 107l4 4" strokeWidth="2" />
            <path d="M14 119h5l-2.500 3z" fill="#202020" />
            <path d="M14 149v-15h-3l5-7 5 7h-3v15z" /><path d="M11 136c-12 3-6 10 5 9 13-1 14-7 5-9M11 140l-4 5 5 3" />
            <path d="M14 157h5l-2.500 3z" fill="#202020" /><path d="M5 164.500h22" stroke="#555" />
            <path d="M4.500 169.500h5v6h-5zM12.500 169.500h6v6h-6zM21.500 169.500h5v6h-5zM4.500 178.500h16v13h-16z" /><path d="M9 181l7 4-7 4z" fill="#202020" />
            <circle cx="26" cy="206" r="3" /><path d="M23 206h6" />
        </svg>
    </div>
)

const Canvas = () => (
    <section className="relative flex-1 bg-black overflow-hidden">
        <svg className="absolute inset-0 w-full h-full" fill="none" stroke="#fff" shapeRendering="crispEdges">
            <circle cx="166" cy="311" r="63.500" />
            <rect x="348.500" y="181.500" width="607" height="258" />
        </svg>
        {/* UCS icon stays in the lower left corner */}
        <svg className="absolute left-[10px] bottom-0" width="80" height="100" viewBox="0 0 80 100" fill="none" stroke="#fff">
            <path d="M1.500 79.500h9v9h-9zM5.500 35v49.500h49.500" shapeRendering="crispEdges" />
            <g fill="#fff" stroke="none" fontSize="18" fontWeight="300" textAnchor="middle"><text x="14" y="30">Y</text><text x="66" y="83">X</text></g>
        </svg>
        <ViewCube />
        <NavBar />
        <svg className="absolute inset-0 w-full h-full" fill="none" stroke="#fff" shapeRendering="crispEdges">
            <path d="M606.500 0v2000M0 333.500h4000" />
            <rect x="597.500" y="324.500" width="18" height="18" />
        </svg>
        <div className="absolute left-[622px] top-[350px] w-[80px] text-[11px] text-black">
            <input aria-label="Command" defaultValue="MOVE" className="block w-[50px] h-[18px] px-[3px] bg-white border border-[#666] outline-none" />
            <div className="mt-px ml-px w-[78px] bg-white">
                <button type="button" className="flex items-center w-full h-[18px] text-white">
                    <span className="w-4 h-4 mx-[2px] bg-[#0000f0]"><Icon name="move" size={16} /></span>
                    <span className="flex-1 h-full pl-px text-left leading-[18px] bg-[#316ac5]">MOVE</span>
                </button>
                <button type="button" className="block h-[18px] pl-[21px]">MOVEBAK</button>
            </div>
        </div>
        <svg className="absolute left-[570px] top-[303px] pointer-events-none" width="154" height="74" fill="none" stroke="#c00000" strokeWidth="2">
            <ellipse cx="76" cy="37" rx="75" ry="36" />
        </svg>
    </section>
)

const Slash = () => <svg width="7" height="15" viewBox="0 0 7 15" className="shrink-0" stroke="#333"><path d="M6.500 0L.5 15" /></svg>

const LayoutTabs = () => (
    <div className="flex items-start h-[17px] bg-[#ece9d8] text-[11px] text-black">
        {['M4 1v9M11 1v9L6 5.500z', 'M10 1v9L5 5.500z', 'M5 1v9l5-4.500z', 'M11 1v9M4 1v9l5-4.500z'].map((d) => (
            <button key={d} type="button" aria-label="Scroll tabs" className="w-[15px] h-[15px] border-r border-[#c5c2b2]">
                <svg width="14" height="12" viewBox="0 0 14 12" fill="#aca899" stroke="#aca899"><path d={d} /></svg>
            </button>
        ))}
        <button type="button" className="w-[54px] h-[15px] bg-black text-white leading-[18px] [clip-path:polygon(0_0,100%_0,50px_100%,6px_100%)]">Model</button>
        <button type="button" className="w-[48px] h-[15px] leading-[18px] border-b border-[#333]">Layout1</button>
        <Slash />
        <button type="button" className="w-[48px] h-[15px] leading-[18px] border-b border-[#333]">Layout2</button>
        <Slash />
    </div>
)

const CommandLine = () => (
    <section className="flex mt-1 bg-white text-black">
        <div className="w-[15px] shrink-0 rounded-tl-md bg-[#a2a2a2]"><span className={clsx('block w-3 h-1 mt-[2px] ml-[2px]', dots)} /></div>
        <div className="flex-1 font-['Liberation_Mono',monospace] text-[13px] leading-4">
            <div className="h-[39px] pt-px pl-[2px] border-b border-[#aca899]">
                <p className="whitespace-pre">Command: Specify opposite corner or [Fence/WPolygon/CPolygon]: *Cancel*</p>
                <p>Command: *Cancel*</p>
            </div>
            <label className="flex items-center h-[19px] pl-[2px] pt-1">Command:<input className="flex-1 outline-none" /></label>
        </div>
    </section>
)

const toggles = ['infer', 'snap', 'grid', 'ortho', 'polar', 'osnap', 'osnap3d', 'otrack', 'ducs', 'dyn', 'lwt', 'tpy', 'qp', 'sc']
const activeToggles = ['polar', 'osnap', 'otrack', 'ducs', 'dyn', 'tpy']
const statusBtn = 'h-[21px] flex items-center justify-center shrink-0 border-r border-[#555] bg-linear-to-b from-[#c4c4c4] to-[#999]'

const StatusBar = () => (
    <section className="flex items-center h-[22px] border-t border-black bg-linear-to-b from-[#757575] to-[#8e8e8e] text-[12px] text-black">
        <span className="w-[172px] pl-3">42.3765, 29.5504, 0.0000</span>
        <div className="flex flex-1 border-l border-[#555]">
            {toggles.map((name) => (
                <IconButton
                    key={name}
                    name={name}
                    className={clsx('w-[22px] h-[21px] border-r border-[#555]', activeToggles.includes(name) ? 'bg-linear-to-b from-[#e2f3f7] to-[#a9d5e2]' : 'bg-linear-to-b from-[#b8b8b8] to-[#9a9a9a]')}
                />
            ))}
        </div>
        <button type="button" className={clsx(statusBtn, 'w-[44px] border-l')}>MODEL</button>
        <IconButton name="layout" className={clsx(statusBtn, 'w-[22px]')} />
        <IconButton name="quickview" className={clsx(statusBtn, 'w-[23px] mr-3')} />
        <button type="button" className={clsx(statusBtn, 'w-[50px] gap-px')}><Icon name="anno" />1:1<Caret className="ml-[2px]" /></button>
        <IconButton name="annovis" className={clsx(statusBtn, 'w-[22px]')} />
        <IconButton name="annoauto" className={clsx(statusBtn, 'w-[22px] mr-[5px]')} />
        <IconButton name="gear" className={clsx(statusBtn, 'w-[23px]')} />
        <IconButton name="unlock" className={clsx(statusBtn, 'w-[22px]')} />
        <IconButton name="hardware" className={clsx(statusBtn, 'w-[22px]')} />
        <IconButton name="bulb" className={clsx(statusBtn, 'w-[27px]')} />
        <button type="button" aria-label="Status menu" className={clsx(statusBtn, 'w-4 pl-1')}><Caret /></button>
        <IconButton name="clean" className={clsx(statusBtn, 'w-[23px]')} />
    </section>
)

const taskIcons: IconMap = {
    lacviet: <><path d="M0 0h16v16H0z" fill="#fff" /><path d="M1 6V1h2v2l1-2h2v5M8 6V1h2l1 2" fill="none" stroke="#111" strokeWidth="1.500" /><path d="M12 5l3-5v5z" fill="#d22" /><path d="M5 7h2v8H5zM3 9h5v1H3z" fill="#d22" /><path d="M10 9h4v5h-4zM14 6v9" fill="none" stroke="#d22" strokeWidth="2" /><path d="M1 11h3v4H1z" fill="#292" /><path d="M7 14h5v2H7z" fill="#333" /></>,
    folder: <><path d="M1 2h6l1 2h6v10H1z" fill="#eebf45" /><path d="M4 5h11v9H4z" fill="#fff0a6" stroke="#b98a1c" /><path d="M10 8h4v6h-4z" fill="#6ba5dc" /></>,
    firefox: <><circle cx="8" cy="8" r="7.500" fill="#e66000" /><circle cx="8.500" cy="6.500" r="4.500" fill="#1d5a9c" /><path d="M1 5c2-1 3 1 5 2 1 .5 2 0 3 1-2 0-2 3 1 3s4-3 4-5c3 5-1 9.500-6 9.500S0 11 1 5z" fill="#f48a12" /></>,
    pdf: <><path d="M1 1h14v14H1z" fill="#fff" stroke="#aaa" /><path d="M3 6c4 2 7 0 9-4l1 2c-1 4-6 6-10 4z" fill="#1c6cc0" /><path d="M4 13c4 0 8-3 9-7v4c-1 3-4 4-7 4z" fill="#f39322" /></>,
    acad: <><path d="M1 4h14v11H1z" fill="#dfe3e6" /><path d="M3 12L7 1h3l3 9-3 1-1-3-3 4z" fill="#d11a22" /><path d="M5 12h8M5 14h8" stroke="#777" /></>,
    word: <><path d="M4 1h11v14H4z" fill="#fff" stroke="#668" /><path d="M7 4h6M7 7h6M7 10h6M7 13h6" stroke="#89a" /><path d="M0 3h9v9H0z" fill="#2a5599" /><text x="4.500" y="11" fontSize="8" fontWeight="700" textAnchor="middle" fill="#fff">W</text></>,
    ie: <><circle cx="8" cy="8" r="5" fill="none" stroke="#5cc1f5" strokeWidth="3" /><path d="M4 8h9" stroke="#5cc1f5" strokeWidth="2" /><path d="M1 14C-1 10 11-1 15 2" fill="none" stroke="#f2d24b" /></>,
    messenger: <><circle cx="11" cy="5" r="4" fill="#f2b950" /><circle cx="5" cy="8" r="4" fill="#c9d8e4" stroke="#567" /><circle cx="5" cy="8" r="1.500" fill="#345" /><path d="M7 13l4-3 3 3-4 3z" fill="#e08b2c" /></>,
    network: <><path d="M1 2h9v7H1z" fill="#26406e" stroke="#cde" /><path d="M3 11h7v2H3z" fill="#cde" /><path d="M11 3c2 1 2 4 0 5M13 1c3 2 3 7 0 9" fill="none" stroke="#dfefff" /><path d="M8 9l6 6M14 9l-6 6" stroke="#e01515" strokeWidth="2" /></>,
    smiley: <><circle cx="8" cy="8" r="7" fill="#f8c630" stroke="#b34a10" /><path d="M3 8h10c0 6-10 6-10 0z" fill="#b31a12" /><path d="M4 8h8v2H4z" fill="#fff" /><path d="M5 4v2M11 4v2" stroke="#402000" strokeWidth="2" /></>,
    viet: <><path d="M1 1h14v14H1z" fill="#f6dede" stroke="#b33" /><text x="8" y="13" fontSize="14" fontWeight="700" textAnchor="middle" fill="#d01818">V</text></>,
    speaker: <><circle cx="7" cy="7" r="6" fill="#8d949b" stroke="#333" /><circle cx="6" cy="6" r="3" fill="#30363c" /><path d="M12 15c2-1 3-3 3-5" fill="none" stroke="#9cf" /></>,
}

const TaskIcon = ({ name }: { name: string }) => <svg width="16" height="16" viewBox="0 0 16 16" className="shrink-0" aria-hidden="true">{taskIcons[name]}</svg>

const tasks = [
    { icon: 'lacviet', title: 'LACVIET - mtd9 EVA...' },
    { icon: 'folder', title: 'beginer' },
    { icon: 'firefox', title: 'Google Translate - ...' },
    { icon: 'pdf', title: 'AutoCAD Tutorial 00...' },
    { icon: 'acad', title: 'AutoCAD 2012 - [Dr...', active: true },
    { icon: 'word', title: 'beginers - Microsoft ...' },
]

const Taskbar = () => (
    <footer className="flex items-stretch h-[30px] bg-linear-to-b from-[#3f8cf3] via-[#245edb] via-20% to-[#1f4fc4] text-white text-[11px]">
        <button type="button" className="w-[97px] shrink-0 flex items-center gap-1 pl-[10px] rounded-r-xl bg-linear-to-b from-[#5fb85f] via-[#3c943c] via-25% to-[#2f7d2f] text-[18px] font-bold italic [text-shadow:1px_1px_2px_#1a3f1a]">
            <svg width="19" height="18" viewBox="0 0 19 18">
                <path d="M3 3c2-2 4-1 6 0L7.500 8.500c-2-1-4-1.500-6 0z" fill="#e8542c" />
                <path d="M10 3.500c2 1 5 1.500 7 0L15.500 9c-2 1.500-5 1-7 0z" fill="#8ccc3c" />
                <path d="M1 10c2-1.500 4-1 6 0L5.500 15.500c-2-1-4-1.500-6 0z" fill="#5c92f0" />
                <path d="M8 10.500c2 1 5 1.500 7 0L13.500 16c-2 1.500-5 1-7 0z" fill="#fbcf3a" />
            </svg>
            start
        </button>
        <div className="w-[101px] shrink-0 flex items-center gap-2 pl-3">
            {['pdf', 'ie', 'messenger'].map((name) => <button key={name} type="button" aria-label={name}><TaskIcon name={name} /></button>)}
            <button type="button" className="pl-[2px] text-[16px] leading-4 pb-3">»</button>
        </div>
        <div className="flex flex-1 min-w-0 gap-[2px] pt-[3px] pb-[2px]">
            {tasks.map(({ icon, title, active }) => (
                <button key={title} type="button" className={clsx('flex-1 min-w-0 flex items-center gap-1 pl-2 rounded-xs border-l border-t', active ? 'bg-[#1c4db5] border-[#143a8f]' : 'bg-[#3b7ef5] border-[#5f9bfa]')}>
                    <TaskIcon name={icon} />
                    <span className="truncate">{title}</span>
                </button>
            ))}
        </div>
        <div className="w-[156px] ml-[6px] shrink-0 flex items-center gap-[3px] bg-linear-to-b from-[#3cb4f7] via-[#1290e8] via-20% to-[#0d7bd5]">
            <button type="button" aria-label="Show hidden icons" className="w-4 h-4 flex items-center justify-center rounded-full bg-[#2f86e8] border border-[#8cc8fa]">
                <svg width="6" height="8" viewBox="0 0 6 8" fill="none" stroke="#fff" strokeWidth="2"><path d="M5 .5L1.500 4 5 7.500" /></svg>
            </button>
            {['network', 'smiley', 'viet', 'speaker'].map((name) => <TaskIcon key={name} name={name} />)}
            <time className="ml-[2px]">10:49 PM</time>
        </div>
    </footer>
)

const App = () => {
    return (
        <div className="min-h-screen flex flex-col bg-[#666] font-[Roboto,'Noto_Sans',sans-serif] cursor-default overflow-hidden">
            <Header />
            <Toolbars />
            <main className="flex flex-1">
                <aside className="w-[29px] shrink-0"><VerticalBar tools={drawTools} /></aside>
                <div className="flex-1 min-w-0 flex flex-col border-l-2 border-t-2 border-[#aca899] border-r-2 border-r-[#f3f1e6] border-b border-b-white">
                    <Canvas />
                    <LayoutTabs />
                </div>
                <aside className="w-8 shrink-0 pl-[5px] flex flex-col">
                    <VerticalBar tools={modifyTools} />
                    <VerticalBar tools={['front', 'back', 'above', 'under']}>
                        <span className="w-5 h-px mx-px mt-[3px] mb-[2px] bg-[#bbb4a8]" />
                        <IconButton name="abc" className="w-[22px] h-[22px]" />
                        <IconButton name="hatchback" className="w-[22px] h-[22px]" />
                    </VerticalBar>
                </aside>
            </main>
            <CommandLine />
            <StatusBar />
            <Taskbar />
        </div>
    )
}

export default App
